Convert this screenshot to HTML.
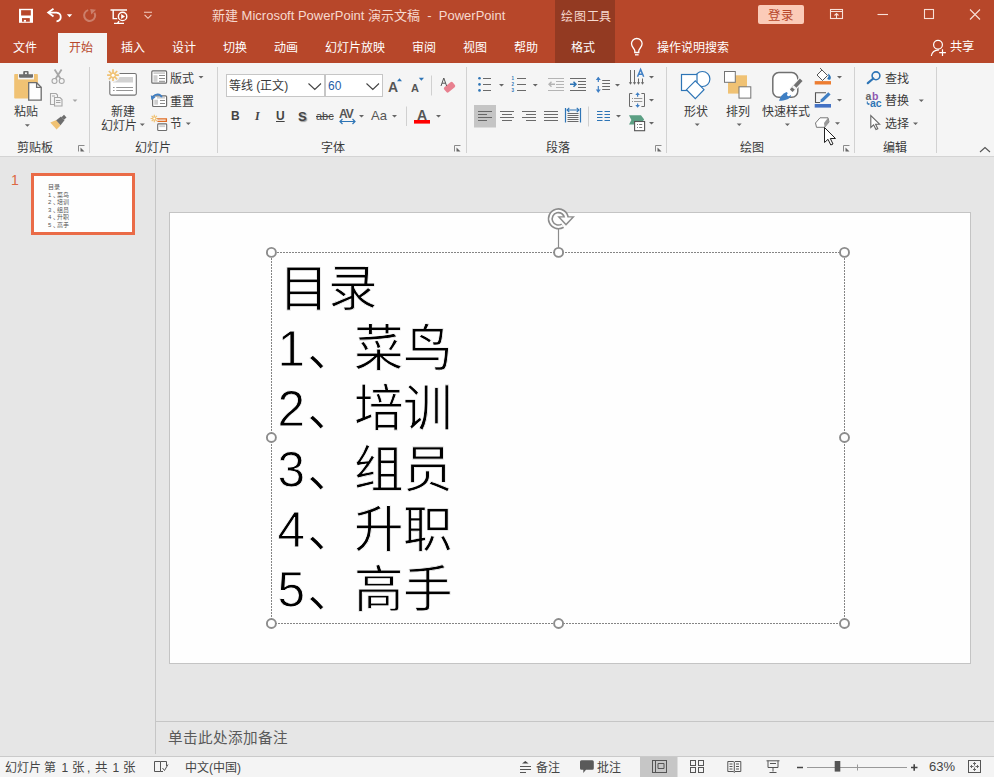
<!DOCTYPE html>
<html lang="zh-CN"><head><meta charset="utf-8">
<style>
*{box-sizing:border-box;margin:0;padding:0}
html,body{width:994px;height:777px;overflow:hidden;background:#e6e6e6;font-family:"Liberation Sans",sans-serif;color:#444}
.a{position:absolute;white-space:nowrap;z-index:2}
svg.a{z-index:1}
#top{position:absolute;left:0;top:0;width:994px;height:63px;background:#b7472a}
#ctx{position:absolute;left:555px;top:0;width:60px;height:63px;background:#933a22}
.tt{color:#f6d9cf;font-size:13px;line-height:13px}
.tab{color:#fff;font-size:12px;line-height:12px;top:42px}
#ribbon{position:absolute;left:0;top:63px;width:994px;height:94px;background:#f5f5f5;border-bottom:1px solid #d4d4d4}
.gl{font-size:12px;line-height:12px;color:#3a3a3a;top:142px}
.sep{position:absolute;width:1px;background:#d2d2d2;top:67px;height:86px}
.lb{font-size:12px;line-height:12px;color:#3a3a3a}
#thumbs{position:absolute;left:0;top:157px;width:155px;height:600px;background:#e6e6e6}
#vline{position:absolute;left:155px;top:159px;width:1px;height:595px;background:#c6c6c6}
#slide{position:absolute;left:169px;top:212px;width:802px;height:452px;background:#fefefe;border:1px solid #c4c4c4}
#notesline{position:absolute;left:156px;top:721px;width:838px;height:1px;background:#c6c6c6}
#status{position:absolute;left:0;top:756px;width:994px;height:21px;background:#f4f4f4;border-top:1px solid #cacaca}
.st{font-size:12px;line-height:12px;color:#444;top:762px}
.big{font-size:49.5px;line-height:50px;color:#000;left:277.5px;-webkit-text-stroke:0.8px #fefefe}
.th{font-size:6px;line-height:6px;color:#555;left:48px}
</style></head><body>
<div id="top"></div>
<div id="ctx"></div>
<div class="a tt" style="left:212px;top:9px">新建 Microsoft PowerPoint 演示文稿&nbsp; -&nbsp; PowerPoint</div>
<div class="a tt" style="left:561px;top:11px;font-size:12px;line-height:12px;letter-spacing:0.8px">绘图工具</div>
<div class="a" style="left:758px;top:5px;width:46px;height:19px;background:#fbcbb8;border-radius:2px;color:#b7472a;font-size:12.5px;text-align:center;line-height:23px">登录</div>

<div class="a tab" style="left:13px">文件</div>
<div class="a" style="left:58px;top:33px;width:49px;height:30px;background:#f5f5f5"></div>
<div class="a tab" style="left:69px;color:#b7472a">开始</div>
<div class="a tab" style="left:121px">插入</div>
<div class="a tab" style="left:172px">设计</div>
<div class="a tab" style="left:223px">切换</div>
<div class="a tab" style="left:274px">动画</div>
<div class="a tab" style="left:325px">幻灯片放映</div>
<div class="a tab" style="left:412px">审阅</div>
<div class="a tab" style="left:463px">视图</div>
<div class="a tab" style="left:514px">帮助</div>
<div class="a tab" style="left:571px">格式</div>
<div class="a tab" style="left:657px">操作说明搜索</div>
<div class="a tab" style="left:950px;top:41px;font-size:12.3px">共享</div>

<div id="ribbon"></div>
<div class="sep" style="left:89px"></div>
<div class="sep" style="left:217px"></div>
<div class="sep" style="left:466px"></div>
<div class="sep" style="left:666px"></div>
<div class="sep" style="left:854px"></div>
<div class="sep" style="left:936px"></div>
<div class="a gl" style="left:17px">剪贴板</div>
<div class="a lb" style="left:14px;top:106px">粘贴</div>
<div class="a lb" style="left:111px;top:106px">新建</div>
<div class="a lb" style="left:101px;top:120px">幻灯片</div>
<div class="a lb" style="left:170px;top:73px">版式</div>
<div class="a lb" style="left:170px;top:96px">重置</div>
<div class="a lb" style="left:170px;top:118px">节</div>
<div class="a gl" style="left:135px">幻灯片</div>
<div class="a gl" style="left:321px">字体</div>
<div class="a lb" style="left:229px;top:80px">等线 (正文)</div>
<div class="a lb" style="left:328px;top:80px;color:#1f5ea8">60</div>
<div class="a" style="left:231px;top:109px;font-size:12px;font-weight:bold;color:#444">B</div>
<div class="a" style="left:255px;top:109px;font-size:12px;font-style:italic;color:#444;font-family:'Liberation Serif',serif;font-weight:bold">I</div>
<div class="a" style="left:276px;top:109px;font-size:12px;font-weight:bold;color:#444;text-decoration:underline">U</div>
<div class="a" style="left:298px;top:109px;font-size:13px;font-weight:bold;color:#444;text-shadow:1px 1px 1px #999">S</div>
<div class="a" style="left:316px;top:110px;font-size:11px;color:#444;text-decoration:line-through">abc</div>
<div class="a" style="left:339px;top:107px;font-size:12px;font-weight:bold;color:#555;letter-spacing:-1px">AV</div>
<div class="a" style="left:371px;top:108px;font-size:13px;color:#555">Aa</div>
<div class="a" style="left:388px;top:79px;font-size:14px;color:#555;font-weight:bold">A</div>
<div class="a" style="left:411px;top:82px;font-size:11px;color:#555;font-weight:bold">A</div>
<div class="a" style="left:417px;top:107px;font-size:14px;color:#555;font-weight:bold">A</div>
<div class="a gl" style="left:546px">段落</div>
<div class="a gl" style="left:740px">绘图</div>
<div class="a lb" style="left:684px;top:106px">形状</div>
<div class="a lb" style="left:726px;top:106px">排列</div>
<div class="a lb" style="left:762px;top:106px">快速样式</div>
<div class="a lb" style="left:885px;top:73px">查找</div>
<div class="a lb" style="left:885px;top:95px">替换</div>
<div class="a lb" style="left:885px;top:118px">选择</div>
<div class="a gl" style="left:883px">编辑</div>

<div id="thumbs"></div>
<div id="vline"></div>
<div class="a" style="left:11px;top:173px;font-size:14px;line-height:14px;color:#dd6843">1</div>
<div class="a" style="left:31px;top:173px;width:104px;height:62px;border:3px solid #ea6b47;background:#fefefe"></div>

<div id="slide"></div>
<div class="a th" style="top:184px">目录</div>
<div class="a th" style="top:191.5px">1<span style="margin-left:2px">、</span><span style="margin-left:-2px">菜鸟</span></div>
<div class="a th" style="top:199px">2<span style="margin-left:2px">、</span><span style="margin-left:-2px">培训</span></div>
<div class="a th" style="top:206.5px">3<span style="margin-left:2px">、</span><span style="margin-left:-2px">组员</span></div>
<div class="a th" style="top:214px">4<span style="margin-left:2px">、</span><span style="margin-left:-2px">升职</span></div>
<div class="a th" style="top:221.5px">5<span style="margin-left:2px">、</span><span style="margin-left:-2px">高手</span></div>
<div class="a big" style="top:264px;left:279px">目录</div>
<div class="a big" style="top:324px">1<span style="margin-left:2px">、</span><span style="margin-left:-2px">菜鸟</span></div>
<div class="a big" style="top:384px">2<span style="margin-left:2px">、</span><span style="margin-left:-2px">培训</span></div>
<div class="a big" style="top:445px">3<span style="margin-left:2px">、</span><span style="margin-left:-2px">组员</span></div>
<div class="a big" style="top:505px">4<span style="margin-left:2px">、</span><span style="margin-left:-2px">升职</span></div>
<div class="a big" style="top:565px">5<span style="margin-left:2px">、</span><span style="margin-left:-2px">高手</span></div>

<div id="notesline"></div>
<div class="a" style="left:168px;top:731px;font-size:14.6px;line-height:14px;color:#5a5a5a">单击此处添加备注</div>
<div id="status"></div>
<div class="a st" style="left:5px">幻灯片 第</div><div class="a st" style="left:61.5px">1</div><div class="a st" style="left:72px;font-size:12.5px">张</div><div class="a st" style="left:87px">,</div><div class="a st" style="left:95px;font-size:12.5px">共</div><div class="a st" style="left:112.5px">1</div><div class="a st" style="left:123px;font-size:12.5px">张</div>
<div class="a st" style="left:185px">中文(中国)</div>
<div class="a st" style="left:536px">备注</div>
<div class="a st" style="left:597px">批注</div>
<div class="a st" style="left:929px;font-size:13px;top:761px">63%</div>
<svg class="a" style="left:0;top:0" width="994" height="777" viewBox="0 0 994 777">
<!-- QAT -->
<rect x="19" y="8.8" width="14" height="14" fill="#fff"/>
<rect x="21.1" y="10.2" width="9.7" height="5.3" fill="#b7472a"/>
<rect x="22" y="18.1" width="7.8" height="3.6" fill="#b7472a"/>
<rect x="23.9" y="19.9" width="2.1" height="1.8" fill="#fff"/>
<path d="M49 12.6H56.5A5 4.4 0 0 1 56.5 21.3" fill="none" stroke="#fff" stroke-width="1.8"/>
<path d="M53.5 8.8L48.2 12.6L53.5 16.4" fill="none" stroke="#fff" stroke-width="1.8"/>
<path d="M66.8 14.2H72.2L69.5 17.2Z" fill="#fff"/>
<g opacity="0.3"><path d="M88.2 10.1A5.5 5.5 0 1 0 94.4 12.65" fill="none" stroke="#fff" stroke-width="2"/><path d="M90.2 9.1L96 9.8L91.3 14.6Z" fill="#fff"/></g>
<g fill="none" stroke="#fff" stroke-width="1.4">
<path d="M110.5 10H127M113.2 10V18.6H117.2"/>
<circle cx="122.6" cy="16.4" r="4.2"/>
<path d="M114 23.4H124M119 21.2L117.5 23.4"/>
</g>
<path d="M121.2 13.9V18.9L125 16.4Z" fill="#fff"/>
<path d="M144 12.3H152M144.6 14.8L148 18.3L151.4 14.8" fill="none" stroke="#f3cfc3" stroke-width="1.1"/>
<!-- window controls -->
<g fill="none" stroke="#f8e0d8" stroke-width="1.1">
<rect x="830.5" y="9.5" width="12" height="9"/>
<path d="M830.5 11.5H842.5M836.5 18.5V13.5M834.5 15.5L836.5 13.5L838.5 15.5"/>
<path d="M877.5 14.5H888"/>
<rect x="924.5" y="9.5" width="9" height="9"/>
<path d="M970 9.5L980 19.5M980 9.5L970 19.5"/>
</g>
<!-- share -->
<g fill="none" stroke="#fff" stroke-width="1.2">
<circle cx="938" cy="44.7" r="4.4"/>
<path d="M931.3 56C931.8 52.3 934.5 50 939 49.8"/>
<path d="M942.5 49.3V56M939.2 52.6H945.9"/>
</g>
<!-- lightbulb -->
<g fill="none" stroke="#fff" stroke-width="1.3">
<path d="M634.8 52.5V50.8C634.8 48.8 631.5 47.2 631.5 43.8A5.3 5.3 0 0 1 642.1 43.8C642.1 47.2 638.8 48.8 638.8 50.8V52.5Z"/>
<path d="M635 54.8H638.6"/>
</g>
</svg>
<svg class="a" style="left:0;top:0" width="994" height="777" viewBox="0 0 994 777">
<!-- clipboard group -->
<rect x="14.2" y="74.1" width="23.7" height="24.4" rx="0.8" fill="#f0c274"/>
<rect x="18" y="73.2" width="16" height="6.2" fill="#f5f5f5"/>
<path d="M19 74.3H23.2V72A1 1 0 0 1 24.2 71H27.6A1 1 0 0 1 28.6 72V74.3H33V76.7A1 1 0 0 1 32 77.7H20A1 1 0 0 1 19 76.7Z" fill="#6d6d6d"/>
<rect x="25" y="72.4" width="1.9" height="1.7" fill="#f5f5f5"/>
<path d="M28.7 82.7H36.6L41.2 87.3V100.1H28.7Z" fill="#fefefe" stroke="#6d6d6d" stroke-width="1.3"/>
<path d="M36.6 82.7V87.3H41.2" fill="none" stroke="#6d6d6d" stroke-width="1.3"/>
<path d="M24.9 124.3L27.4 126.8L29.9 124.3Z" fill="#666"/>
<g fill="none" stroke="#a6a6a6" stroke-width="1.1">
<circle cx="54.5" cy="81" r="2.5"/><circle cx="61.7" cy="81" r="2.5"/>
<path d="M50.5 93.5H56L57.5 95V104.5H50.5Z"/>
<path d="M54.5 97.5H60L62 99.5V106H54.5Z" fill="#f3f3f3"/>
<path d="M56 100.5H60.5M56 102.5H60.5M52 96H55"/>
</g>
<path d="M72.6 99.6L75 102L77.4 99.6Z" fill="#a6a6a6"/>
<path d="M55.6 78.8L61.6 69.4M60.6 78.8L54.6 69.4" stroke="#a6a6a6" stroke-width="1.8"/>
<path d="M50.3 122.5L56.5 120L60.5 125.5L56.6 129.4Z" fill="#f0c274"/>
<path d="M56.2 120.2L61 116.5L64.5 120.3L60.5 125.3Z" fill="#6d6d6d"/>
<path d="M61.5 117.2L64 114.8L66.5 117.5L64 119.8Z" fill="#6d6d6d"/>
<!-- new slide -->
<rect x="109.8" y="73.5" width="26.5" height="21.6" rx="1.5" fill="#fff" stroke="#737373" stroke-width="1.1"/>
<rect x="113" y="77" width="20" height="5.5" fill="#d2d2d2"/>
<path d="M113 87.5H133M113 90.5H133" stroke="#8a8a8a" stroke-width="0.9"/>
<path d="M114.6 87.5H116.2M114.6 90.5H116.2" stroke="#fff" stroke-width="1.2"/>
<circle cx="113" cy="75.2" r="6.8" fill="#f5f5f5"/>
<g stroke="#f0c274" stroke-width="1.7"><path d="M113 69.3V81.1M107.1 75.2H118.9M108.8 71L117.2 79.4M117.2 71L108.8 79.4"/></g>
<circle cx="113" cy="75.2" r="2.7" fill="#f0c274"/><circle cx="113" cy="75.2" r="1.5" fill="#fff"/>
<path d="M139.8 123.5L142.3 126L144.8 123.5Z" fill="#666"/>
<!-- layout -->
<rect x="151.8" y="70.9" width="14.8" height="12.3" rx="1" fill="#fff" stroke="#6d6d6d" stroke-width="1.2"/>
<rect x="153.5" y="72.2" width="11.5" height="1.8" fill="#cfcfcf"/>
<rect x="153.5" y="75.2" width="4" height="6.6" fill="#cfcfcf"/>
<path d="M159 75.5H165M159 78.5H165M159 81.3H165" stroke="#8a8a8a" stroke-width="1"/>
<path d="M198.5 76L201 78.5L203.5 76Z" fill="#666"/>
<!-- reset -->
<rect x="152.6" y="95.8" width="14" height="10.7" rx="1" fill="#fff" stroke="#6d6d6d" stroke-width="1.2"/>
<rect x="157" y="97" width="8" height="1.6" fill="#cfcfcf"/>
<rect x="154.3" y="99.7" width="3.7" height="5" fill="#cfcfcf"/>
<path d="M160 100.5H165M160 103.5H165" stroke="#8a8a8a" stroke-width="1"/>
<path d="M161.8 97.2C160.5 93.8 155.5 93.2 153.3 96.8" fill="none" stroke="#3f7fc4" stroke-width="1.7"/>
<path d="M150.8 95.2L151.3 100L155.6 97.6Z" fill="#3f7fc4"/>
<!-- section -->
<g stroke="#f0c274" stroke-width="1.2"><path d="M154.3 114.8V122.2M150.6 118.5H158M151.7 115.9L156.9 121.1M156.9 115.9L151.7 121.1"/></g>
<circle cx="154.3" cy="118.5" r="1.9" fill="#f0c274"/><circle cx="154.3" cy="118.5" r="1" fill="#fff"/>
<path d="M157.4 118.9H166.4V121.3H157.4" fill="none" stroke="#e06c22" stroke-width="1.3"/>
<rect x="157.7" y="123.9" width="9" height="6.6" rx="0.8" fill="#fff" stroke="#6d6d6d" stroke-width="1.1"/>
<rect x="159.3" y="125.3" width="5.8" height="1.8" fill="#cfcfcf"/>
<path d="M185.8 122.5L188.3 125L190.8 122.5Z" fill="#666"/>
</svg>
<svg class="a" style="left:0;top:0" width="994" height="777" viewBox="0 0 994 777">
<!-- launchers -->
<g fill="none" stroke="#8a8a8a" stroke-width="1"><path d="M78.5 151.5V145.5H84.5M454.5 151.5V145.5H460.5M655.5 151.5V145.5H661.5M843.5 151.5V145.5H849.5"/></g>
<g fill="#666"><path d="M80.5 147.5L84.5 151.5H80.5Z"/><path d="M456.5 147.5L460.5 151.5H456.5Z"/><path d="M657.5 147.5L661.5 151.5H657.5Z"/><path d="M845.5 147.5L849.5 151.5H845.5Z"/></g>
<!-- font combos -->
<rect x="226.5" y="74.5" width="98" height="22" fill="#fff" stroke="#c6c6c6"/>
<rect x="325.5" y="74.5" width="57" height="22" fill="#fff" stroke="#c6c6c6"/>
<path d="M308.5 83.5L314.8 89.5L321 83.5M366.5 83.5L372.8 89.5L379 83.5" fill="none" stroke="#444" stroke-width="1.1"/>
<!-- grow/shrink -->
<path d="M397 81.2L399.5 78.2L402 81.2Z M418.8 77.8H424L421.4 80.8Z" fill="#2e75b6"/>
<path d="M431.5 75.5V95.5M406.5 106.5V126" stroke="#d0d0d0" stroke-width="1"/>
<!-- clear formatting -->
<rect x="444" y="84" width="11" height="6.5" rx="1.5" transform="rotate(-40 449.5 87.2)" fill="#e8808f"/>
<path d="M441 86L443.8 78L446.6 86M442 83.2H445.6" fill="none" stroke="#555" stroke-width="1"/>
<!-- AV arrow -->
<path d="M340 121.5H355M342.5 119L340 121.5L342.5 124M352.5 119L355 121.5L352.5 124" fill="none" stroke="#2e75b6" stroke-width="1.2"/>
<path d="M359 115L361.5 117.5L364 115Z M392 115L394.5 117.5L397 115Z M436 115L438.5 117.5L441 115Z" fill="#666"/>
<rect x="414" y="120" width="16" height="3.6" fill="#ff0000"/>
</svg>
<svg class="a" style="left:0;top:0" width="994" height="777" viewBox="0 0 994 777">
<!-- bullets -->
<g fill="#2e75b6"><circle cx="479.5" cy="78.2" r="1.3"/><circle cx="479.5" cy="84.4" r="1.3"/><circle cx="479.5" cy="90.4" r="1.3"/></g>
<path d="M483 78.5H491M483 84.5H491M483 90.5H491" stroke="#6a6a6a" stroke-width="1"/>
<path d="M499 84L501.5 86.5L504 84Z M532.8 84L535.3 86.5L537.8 84Z M615 84L617.5 86.5L620 84Z M649 76L651.5 78.5L654 76Z M649 99L651.5 101.5L654 99Z M649 122L651.5 124.5L654 122Z M616 115L618.5 117.5L621 115Z" fill="#666"/>
<g fill="#2e75b6" font-size="4.5" font-family="Liberation Sans" font-weight="bold"><text x="511.5" y="80">1</text><text x="511.5" y="86.3">2</text><text x="511.5" y="92.3">3</text></g>
<path d="M517 78.5H526M517 84.5H526M517 90.5H526" stroke="#6a6a6a" stroke-width="1"/>
<!-- indents -->
<path d="M548 78.5H564M556 81.5H564M556 84.5H564M556 87.5H564M548 90.5H564" stroke="#b4b4b4" stroke-width="1"/>
<path d="M555 84.3H549M551.5 81.8L549 84.3L551.5 86.8" fill="none" stroke="#b4b4b4" stroke-width="1.4"/>
<path d="M570 78.5H586M578 81.5H586M578 84.5H586M578 87.5H586M570 90.5H586" stroke="#6a6a6a" stroke-width="1"/>
<path d="M570 84.3H576M573.5 81.8L576 84.3L573.5 86.8" fill="none" stroke="#2e75b6" stroke-width="1.5"/>
<!-- line spacing -->
<path d="M598.3 77.5V82M598.3 86V92.3" stroke="#3f7fc4" stroke-width="1.2"/>
<path d="M595.8 80L598.3 76.8L600.8 80ZM595.8 89.6L598.3 92.8L600.8 89.6Z" fill="#3f7fc4"/>
<path d="M602.2 80.5H610M602.2 83.5H610M602.2 86.5H610M602.2 89.5H610" stroke="#6a6a6a" stroke-width="1"/>
<!-- text direction -->
<path d="M630.5 70V83M634.5 70V83M638.5 78.5V83M642.5 78.5V83" stroke="#6a6a6a" stroke-width="1"/>
<path d="M628.8 82.3L630.5 84.8L632.2 82.3ZM632.8 82.3L634.5 84.8L636.2 82.3ZM636.8 82.3L638.5 84.8L640.2 82.3ZM640.8 82.3L642.5 84.8L644.2 82.3Z" fill="#6a6a6a"/>
<path d="M637.5 76.8L640.6 69.4L643.7 76.8M638.6 74.3H642.6" fill="none" stroke="#3f7fc4" stroke-width="1.5"/>
<!-- align text -->
<path d="M632.3 93.5H629.5V106.5H632.3M641.4 93.5H644.5V106.5H641.4" fill="none" stroke="#6a6a6a" stroke-width="1"/>
<path d="M634 98.5H642.3M634 101.5H642.3" stroke="#999" stroke-width="1"/>
<path d="M632 98.5H632.8M632 101.5H632.8" stroke="#777" stroke-width="1"/>
<path d="M637.6 94V96.8M637.6 103.4V106.3" stroke="#3f7fc4" stroke-width="1.2"/>
<path d="M635.3 95L637.6 92.2L639.9 95ZM635.3 105L637.6 107.8L639.9 105Z" fill="#3f7fc4"/>
<!-- smartart -->
<path d="M629 115.2H641L644.2 119.5L641 123.5H634V124.5H629L631.4 120Z" fill="#5b9f83"/>
<rect x="634.6" y="121.5" width="10" height="9.2" fill="#fff" stroke="#555" stroke-width="1.1"/>
<path d="M637 124.5H638M639.2 124.5H642.2M637 127.5H638M639.2 127.5H642.2" stroke="#777" stroke-width="1"/>
<!-- align buttons -->
<rect x="474" y="105" width="22" height="22.5" fill="#c5c5c5"/>
<path d="M478 111.5H492M478 114.5H487M478 117.5H492M478 120.5H487" stroke="#666" stroke-width="1"/>
<path d="M500 111.5H514M502 114.5H512M500 117.5H514M502 120.5H512" stroke="#6a6a6a" stroke-width="1"/>
<path d="M522 111.5H536M526 114.5H536M522 117.5H536M526 120.5H536" stroke="#6a6a6a" stroke-width="1"/>
<path d="M544 111.5H558M544 114.5H558M544 117.5H558M544 120.5H558" stroke="#6a6a6a" stroke-width="1"/>
<path d="M565.5 108V122.5M580.5 108V122.5" stroke="#2e75b6" stroke-width="1.2"/>
<path d="M567 110H579M569.3 107.8L567 110L569.3 112.2M576.7 107.8L579 110L576.7 112.2" fill="none" stroke="#2e75b6" stroke-width="1.1"/>
<path d="M567.5 113.5H578.5M567.5 115.5H578.5M567.5 117.5H578.5M567.5 119.5H578.5M567.5 121.5H578.5" stroke="#6a6a6a" stroke-width="1"/>
<path d="M588.5 106.5V126.5" stroke="#d0d0d0" stroke-width="1"/>
<!-- columns -->
<path d="M597 111.5H602.5M604.5 111.5H610M597 114.5H602.5M604.5 114.5H610M597 117.5H602.5M604.5 117.5H610M597 120.5H602.5M604.5 120.5H610" stroke="#2e75b6" stroke-width="1.1"/>
</svg>
<svg class="a" style="left:0;top:0" width="994" height="777" viewBox="0 0 994 777">
<!-- shapes -->
<circle cx="702.4" cy="79" r="7.5" fill="#fff" stroke="#2e75b6" stroke-width="1.2"/>
<rect x="681.5" y="74.5" width="15.5" height="16" fill="#fff" stroke="#2e75b6" stroke-width="1.2"/>
<path d="M695.3 80.8L704 89.7L695.3 98.6L686.5 89.7Z" fill="#fff" stroke="#2e75b6" stroke-width="1.2"/>
<path d="M694.7 123.5L697.2 126L699.7 123.5Z M736.7 123.5L739.2 126L741.7 123.5Z M784.9 123.5L787.4 126L789.9 123.5Z" fill="#666"/>
<!-- arrange -->
<rect x="728" y="75.3" width="19" height="18.3" fill="#f0c274"/>
<rect x="724.5" y="71.5" width="10.8" height="10.8" fill="#fff" stroke="#737373" stroke-width="1"/>
<rect x="739" y="86.8" width="11.8" height="11.3" fill="#fff" stroke="#737373" stroke-width="1"/>
<!-- quick styles -->
<rect x="772.8" y="72.6" width="25" height="24.6" rx="6" fill="#fff" stroke="#707070" stroke-width="1.5"/>
<path d="M786 94L792 101H776Z" fill="#f5f5f5"/>
<path d="M791.5 90.5L801.5 79.5" stroke="#f5f5f5" stroke-width="6"/>
<path d="M791.2 90.8L801.2 79.8" stroke="#707070" stroke-width="3.6"/>
<path d="M793.5 88.5L795.2 86.6" stroke="#f5f5f5" stroke-width="4" />
<path d="M779 100.8C780 97 782.5 93.5 786.5 92L791 95.8C789.5 99.5 785 100.6 779 100.8Z" fill="#3f7fc4"/>
<circle cx="788.6" cy="94.6" r="1.6" fill="#fff"/>
<!-- fill / outline / effects -->
<path d="M817 75L822 70L827.5 75.5L822.5 80.5Z" fill="#fff" stroke="#555" stroke-width="1"/>
<path d="M822 70L820 68" stroke="#555" stroke-width="1"/>
<path d="M828 73.5C830.5 75 831.5 77.5 830.5 79.2C829.5 80.2 828 79.8 827.2 78.8L828.5 76.5Z" fill="#2e75b6"/>
<rect x="814.7" y="81.1" width="16.3" height="3.4" fill="#ed7d31"/>
<path d="M826 92.7H815.5V102.5H820" fill="none" stroke="#555" stroke-width="1.1"/>
<path d="M820.2 102.5L821 99.3L828.3 92.2L830.6 94.4L823.3 101.6Z" fill="#3f7fc4"/>
<rect x="814.7" y="104" width="16.3" height="3.6" fill="#4472c4"/>
<path d="M815.5 123L820 117.8H828L829 122L824.5 127.3H816.5Z" fill="#fff" stroke="#777" stroke-width="1"/>
<path d="M824.5 127.3L829 122L828 117.8L824 123Z" fill="#999"/>
<path d="M837 76L839.5 78.5L842 76Z M837 99L839.5 101.5L842 99Z M835 122.2L837.5 124.7L840 122.2Z" fill="#666"/>
<!-- cursor -->
<path d="M824.5 127.5V142.5L828 139.3L830.8 145L833 144L830.3 138.5H835.5Z" fill="#fff" stroke="#222" stroke-width="1"/>
<!-- find -->
<circle cx="876" cy="75.8" r="3.9" fill="none" stroke="#2e75b6" stroke-width="1.6"/>
<path d="M873.3 78.5L867.8 83.2" stroke="#2e75b6" stroke-width="2.2" stroke-linecap="round"/>
<g font-family="Liberation Sans" font-size="10.5" font-weight="bold"><text x="865.5" y="100.3" fill="#666">a</text><text x="872" y="100.3" fill="#8e55b0">b</text><text x="870" y="106.8" fill="#2e75b6">ac</text></g>
<path d="M867.3 101.5V104H869.3M868.3 103L869.3 104L868.3 105" fill="none" stroke="#2e75b6" stroke-width="1"/>
<path d="M918.8 99.5L921.3 102L923.8 99.5Z M913 122.5L915.5 125L918 122.5Z" fill="#666"/>
<path d="M870.8 115.5V127.5L873.6 124.8L876 129.5L877.8 128.7L875.6 124.2H879.6Z" fill="#fff" stroke="#666" stroke-width="1.1"/>
<path d="M980 152L985 147.5L990 152" fill="none" stroke="#555" stroke-width="1.1"/>
</svg>
<svg class="a" style="left:0;top:0" width="994" height="777" viewBox="0 0 994 777">
<!-- selection box -->
<rect x="271.5" y="252.5" width="573" height="371" fill="none" stroke="#858585" stroke-width="1" stroke-dasharray="2 1" stroke-dashoffset="0.5"/>
<path d="M558.5 228V247.5" stroke="#8c8c8c" stroke-width="1.2"/>
<g fill="#fefefe" stroke="#8c8c8c" stroke-width="1.9">
<circle cx="271.4" cy="252.4" r="4.5"/><circle cx="558.6" cy="252.4" r="4.5"/><circle cx="844.5" cy="252.4" r="4.5"/>
<circle cx="271.4" cy="437.5" r="4.5"/><circle cx="844.5" cy="437.5" r="4.5"/>
<circle cx="271.4" cy="623.5" r="4.5"/><circle cx="558.6" cy="623.5" r="4.5"/><circle cx="844.5" cy="623.5" r="4.5"/>
</g>
<!-- rotate -->
<path d="M562.67 225.63A8.05 8.05 0 1 1 566.42 218.1" fill="none" stroke="#8c8c8c" stroke-width="5.3"/>
<path d="M557.2 216.2H575L566 225.8Z" fill="#8c8c8c"/>
<path d="M562.67 225.63A8.05 8.05 0 1 1 566.42 218.1" fill="none" stroke="#fefefe" stroke-width="2.1"/>
<path d="M560.3 217.6H571.8L566 223.6Z" fill="#fefefe"/>
<!-- status bar icons -->
<g fill="none" stroke="#555" stroke-width="1">
<path d="M154.5 761.5H160.5V771.5H154.5ZM160.5 761.5H166.5V766M160.5 771.5H163"/>
<path d="M162.5 768L164.5 770.5L168 764.5"/>
<path d="M520 766.5H531M520 769.5H531M520 772.5H526"/>
<rect x="652.5" y="760.5" width="14" height="12"/>
<path d="M655.5 760.5V772.5M658 763.5H664V768.5H658Z"/>
<rect x="690.5" y="760.5" width="5" height="5"/><rect x="698.5" y="760.5" width="5" height="5"/>
<rect x="690.5" y="767.5" width="5" height="5"/><rect x="698.5" y="767.5" width="5" height="5"/>
<path d="M727.8 761.5H733.5L734.3 762.5L735 761.5H740.8V771.5H735L734.3 772.5L733.5 771.5H727.8ZM734.3 762.5V771.5M729.5 764H732.5M729.5 766.5H732.5M729.5 769H732.5M736 764H739M736 766.5H739M736 769H739"/>
<path d="M766.5 760.8H779.5M768 760.8V767.5H778V760.8M773 767.5V771.5M769.5 772.5H776.5M770 763.5H776"/>
<rect x="968.5" y="760.5" width="12" height="12"/>
</g>
<path d="M525.3 761L522 763.6H528.6Z" fill="#444"/>
<path d="M581.5 760.3H592.3A1.5 1.5 0 0 1 593.8 761.8V768.2A1.5 1.5 0 0 1 592.3 769.7H586L583.3 773V769.7H581.5A1.5 1.5 0 0 1 580 768.2V761.8A1.5 1.5 0 0 1 581.5 760.3Z" fill="#5a5a5a"/>
<rect x="640" y="757" width="37.5" height="20" fill="#c6c6c6"/>
<rect x="652.5" y="760.5" width="14" height="12" fill="none" stroke="#555"/>
<path d="M655.5 760.5V772.5M658 763.5H664V768.5H658Z" fill="none" stroke="#555"/>
<path d="M797 767.5H803M911 767.5H917.5M914.2 764.2V770.8" stroke="#444" stroke-width="1.6"/>
<path d="M807 767.5H907" stroke="#999" stroke-width="1"/>
<path d="M857.5 764.5V770.5" stroke="#999" stroke-width="1"/>
<rect x="834.7" y="761" width="5.6" height="10.6" fill="#555"/>
<g fill="none" stroke="#555" stroke-width="0.9"><path d="M974.5 762.5V765.5M973 764L974.5 762.5L976 764M974.5 770.5V767.5M973 769L974.5 770.5L976 769M970.5 766.5H973.5M972 765L970.5 766.5L972 768M978.5 766.5H975.5M977 765L978.5 766.5L977 768"/></g>
</svg>
<!--SVG-->
</body></html>
